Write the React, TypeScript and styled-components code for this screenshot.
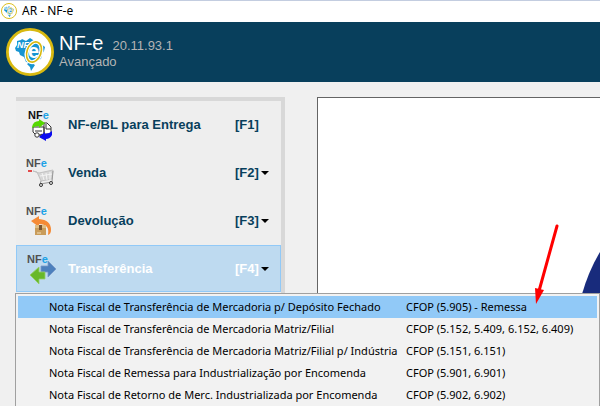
import React from 'react';
import styled, { createGlobalStyle } from 'styled-components';

const GlobalStyle = createGlobalStyle`
  * { box-sizing: border-box; }
  html, body { margin: 0; height: 100%; overflow: hidden; background: #f0f0f0; }
  button { font: inherit; border: 0; background: none; padding: 0; margin: 0; text-align: left; }
`;

const Window = styled.div`
  display: flex;
  flex-direction: column;
  height: 100vh;
  font-family: "Liberation Sans", Arial, sans-serif;
`;

const TitleBar = styled.div`
  display: flex;
  align-items: center;
  gap: 5px;
  height: 22px;
  flex: none;
  padding: 0 1px 2px;
  border-top: 1px solid #c3cde0;
  background: #fff;
  color: #000;
  font: 12px "Noto Sans", sans-serif;
`;

const Header = styled.header`
  display: flex;
  align-items: center;
  gap: 5px;
  height: 60px;
  flex: none;
  padding: 0 6px;
  background: #083f5c;
`;

const Heading = styled.div`
  display: flex;
  flex-direction: column;
  padding-bottom: 2px;
`;

const TitleLine = styled.div`
  display: flex;
  align-items: baseline;
  gap: 9px;
`;

const AppName = styled.h1`
  margin: 0;
  font-weight: 400;
  font-size: 20px;
  line-height: 20px;
  color: #fff;
`;

const Version = styled.span`
  font-size: 13px;
  line-height: 18px;
  color: #b4b4b4;
`;

const Mode = styled.span`
  font-size: 13px;
  line-height: 14px;
  color: #b4b4b4;
`;

const Main = styled.main`
  display: flex;
  flex: 1;
  min-height: 0;
  gap: 32px;
  padding: 15px 0 0 16px;
`;

const Sidebar = styled.nav`
  width: 269px;
  flex: none;
  border-top: 4px solid #d8d8d8;
  border-right: 4px solid #d8d8d8;
  background: #eee;
`;

const Entry = styled.div`
  position: relative;
  height: 48px;
`;

const EntryButton = styled.button<{ $active?: boolean }>`
  display: grid;
  grid-template-columns: 42px 1fr 23px 14px;
  align-items: center;
  width: 100%;
  height: 47px;
  padding: 0 8px 0 9px;
  border: 1px solid ${p => (p.$active ? '#91c9f7' : 'transparent')};
  background: ${p => (p.$active ? '#bedaf0' : 'transparent')};
  color: ${p => (p.$active ? '#fff' : '#083f5c')};
  font-size: 13px;
  font-weight: 700;
`;

const Caret = styled.span`
  justify-self: center;
  border: 4px solid transparent;
  border-top-color: #000;
  border-bottom: 0;
`;

const Canvas = styled.section`
  display: flex;
  flex: 1;
  justify-content: flex-end;
  border-top: 1px solid #646464;
  border-left: 1px solid #646464;
  background: #fff;
`;

const CurveArt = styled.svg`
  display: block;
  margin-top: 152px;
`;

const Menu = styled.div`
  position: absolute;
  z-index: 1;
  top: 100%;
  left: -1px;
  width: calc(100vw - 15px);
  padding: 2px;
  border: 1px solid #a0a0a0;
  background: #f2f2f2;
`;

const MenuItem = styled.button<{ $active?: boolean }>`
  display: grid;
  grid-template-columns: 357px 1fr;
  align-items: center;
  width: 100%;
  height: 22px;
  padding: 0 0 2px 31px;
  background: ${p => (p.$active ? '#91c9f7' : 'transparent')};
  color: #000;
  font: 11px "Noto Sans", sans-serif;
  white-space: nowrap;
`;

const Pointer = styled.svg`
  position: absolute;
  z-index: 2;
  left: 517px;
  top: -22px;
  pointer-events: none;
`;

const LogoLetters = styled.text`
  font: italic 700 9px "Liberation Sans", Arial, sans-serif;
`;

const LogoE = styled.text`
  font: 700 20px "Liberation Sans", Arial, sans-serif;
`;

function Logo({ size }: { size: number }) {
  return (
    <svg width={size} height={size} viewBox="0 0 48 48" aria-hidden="true">
      <circle cx="24" cy="24" r="22.6" fill="#fff" stroke="#d8b910" strokeWidth="2.8" />
      <path
        d="M9 20l2-3v-4l4-1 1-1 4 2 4-3 3 2 3 3 5 1 4 3-1 4-2 3-1 5-4 1-4 3-7-1-2-5-4-2-1-3-3-1z"
        fill="#1795d2"
      />
      <path d="M21 36l3-2 5 3-4 6-1-4z" fill="#1795d2" />
      <LogoLetters x="11" y="20" fill="#fff">NF</LogoLetters>
      <ellipse cx="28" cy="24" rx="7" ry="10.5" transform="rotate(20 28 24)" fill="#1795d2" stroke="#fff" strokeWidth="4" />
      <ellipse cx="28" cy="24" rx="7" ry="10.5" transform="rotate(20 28 24)" fill="none" stroke="#d8b910" strokeWidth="1.6" />
      <LogoE x="22" y="30" fill="#fff">e</LogoE>
    </svg>
  );
}

const IconText = styled.text`
  font: 700 11px "Liberation Sans", Arial, sans-serif;
`;

type Kind = 'delivery' | 'cart' | 'return' | 'transfer';

function EntryIcon({ kind }: { kind: Kind }) {
  return (
    <svg width="32" height="36" viewBox="0 0 32 36" aria-hidden="true">
      <IconText x={kind === 'delivery' ? 2 : kind === 'transfer' ? 1 : 0} y="12" fill={kind === 'delivery' ? '#111' : '#505050'}>
        NF<tspan fill="#1ba1e6">e</tspan>
      </IconText>
      {kind === 'delivery' && (
        <g>
          <path d="M7 20h11v8H10l-3-3zM18 16h3l4 4v7h-7z" fill="#fff" stroke="#333" />
          <path d="M9 24h7M20 17v5h5" fill="none" stroke="#333" />
          <circle cx="11" cy="28" r="2.2" fill="#fff" stroke="#333" />
          <circle cx="16" cy="29" r="1.8" fill="#fff" stroke="#333" />
          <path d="M6 20q1-6 7-6v-2l6 4-6 5v-2q-4 0-7 2z" fill="#55d800" />
          <path d="M26 24v4q-2 4-6 4v2l-7-4 6-5v2q4 0 7-3z" fill="#0b0bef" />
        </g>
      )}
      {kind === 'cart' && (
        <g>
          <path d="M2 16h4" stroke="#e02020" strokeWidth="1.6" />
          <path d="M7 16l4 1 4 9 11-2 1-9-14 3z" fill="#d6d6d6" stroke="#c2c2c2" />
          <path d="M16 18l2 7m2-7l1 7m3-8v8M14 21l12-2" stroke="#f4f4f4" />
          <path d="M15 26l-1 3 12-2 1-11" fill="none" stroke="#999" />
          <circle cx="15" cy="30" r="1.5" fill="#eee" stroke="#333" />
          <circle cx="25" cy="28" r="1.5" fill="#eee" stroke="#333" />
        </g>
      )}
      {kind === 'return' && (
        <g>
          <path d="M5 18l8-5v3q12 1 12 11 0 4-3 5 2-11-9-11v3z" fill="#f58a35" />
          <path d="M9 22h11v10H9z" fill="#c99c5a" />
          <path d="M9 22h11v3H9z" fill="#dfbd83" />
          <path d="M13 22h3v5h-3z" fill="#765331" />
          <path d="M11 30h4" stroke="#f2dfb9" />
        </g>
      )}
      {kind === 'transfer' && (
        <g>
          <path d="M15 15h7v-5l8 8-8 8v-5h-7z" fill="#4d80bd" stroke="#7798c6" strokeWidth="0.8" />
          <path d="M19 21h-6v-5l-9 8 9 9v-5h6z" fill="#68b82a" stroke="#98cf6a" strokeWidth="0.8" />
        </g>
      )}
    </svg>
  );
}

const entries: { kind: Kind; label: string; shortcut: string; menu: boolean }[] = [
  { kind: 'delivery', label: 'NF-e/BL para Entrega', shortcut: '[F1]', menu: false },
  { kind: 'cart', label: 'Venda', shortcut: '[F2]', menu: true },
  { kind: 'return', label: 'Devolução', shortcut: '[F3]', menu: true },
  { kind: 'transfer', label: 'Transferência', shortcut: '[F4]', menu: true },
];

const operations = [
  ['Nota Fiscal de Transferência de Mercadoria p/ Depósito Fechado', 'CFOP (5.905) - Remessa'],
  ['Nota Fiscal de Transferência de Mercadoria Matriz/Filial', 'CFOP (5.152, 5.409, 6.152, 6.409)'],
  ['Nota Fiscal de Transferência de Mercadoria Matriz/Filial p/ Indústria', 'CFOP (5.151, 6.151)'],
  ['Nota Fiscal de Remessa para Industrialização por Encomenda', 'CFOP (5.901, 6.901)'],
  ['Nota Fiscal de Retorno de Merc. Industrializada por Encomenda', 'CFOP (5.902, 6.902)'],
];

export default function App() {
  return (
    <Window>
      <GlobalStyle />
      <TitleBar>
        <Logo size={16} />
        <span>AR - NF-e</span>
      </TitleBar>
      <Header>
        <Logo size={48} />
        <Heading>
          <TitleLine>
            <AppName>NF-e</AppName>
            <Version>20.11.93.1</Version>
          </TitleLine>
          <Mode>Avançado</Mode>
        </Heading>
      </Header>
      <Main>
        <Sidebar>
          {entries.map(entry => {
            const active = entry.kind === 'transfer';
            return (
              <Entry key={entry.kind}>
                <EntryButton $active={active} aria-expanded={entry.menu ? active : undefined}>
                  <EntryIcon kind={entry.kind} />
                  <span>{entry.label}</span>
                  <span>{entry.shortcut}</span>
                  {entry.menu && <Caret />}
                </EntryButton>
                {active && (
                  <>
                    <Menu role="menu">
                      {operations.map(([name, code], i) => (
                        <MenuItem key={name} role="menuitem" $active={i === 0}>
                          <span>{name}</span>
                          <span>{code}</span>
                        </MenuItem>
                      ))}
                    </Menu>
                    <Pointer width="30" height="84" viewBox="0 0 30 84" aria-hidden="true">
                      <path d="M24 3L6 68" stroke="#f00" strokeWidth="3" strokeLinecap="round" />
                      <path d="M2 65l9 2-8 14z" fill="#f00" />
                    </Pointer>
                  </>
                )}
              </Entry>
            );
          })}
        </Sidebar>
        <Canvas>
          <CurveArt width="18" height="44" viewBox="0 0 18 44" aria-hidden="true">
            <path d="M0 44Q7 20 18 2v42z" fill="#182b7c" />
          </CurveArt>
        </Canvas>
      </Main>
    </Window>
  );
}
